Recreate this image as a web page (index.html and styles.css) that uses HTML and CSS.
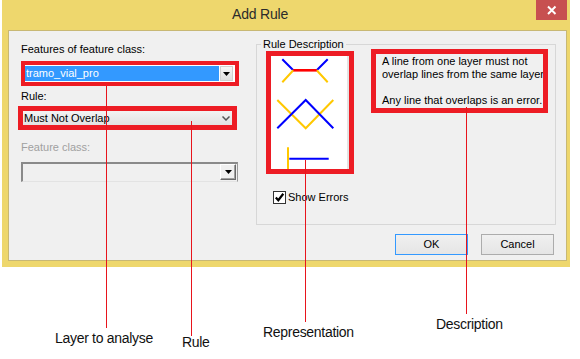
FILE: index.html
```html
<!DOCTYPE html>
<html>
<head>
<meta charset="utf-8">
<title>Add Rule</title>
<link rel="stylesheet" href="styles.css">
</head>
<body>
<div class="dialog">
  <div class="titlebar">
    <span class="title">Add Rule</span>
    <div class="close">
      <svg width="31" height="20" viewBox="0 0 31 20"><path d="M12 6.5 L19.5 14 M19.5 6.5 L12 14" stroke="#fff" stroke-width="2" fill="none"/></svg>
    </div>
  </div>
  <div class="client">
    <div class="top">
      <div class="leftcol">
        <div class="lbl">Features of feature class:</div>
        <div class="hl hl1">
          <div class="combo">
            <span class="selval">tramo_vial_pro</span>
            <span class="dbtn"><svg width="7" height="4" viewBox="0 0 7 4"><path d="M0 0 H7 L3.5 4 Z" fill="#000"/></svg></span>
          </div>
        </div>
        <div class="lbl lbl-rule">Rule:</div>
        <div class="hl hl2">
          <div class="dropdown">
            <span class="ddval">Must Not Overlap</span>
            <svg width="8" height="5" viewBox="0 0 8 5"><path d="M0.5 0.5 L4 4 L7.5 0.5" stroke="#555" stroke-width="1.5" fill="none"/></svg>
          </div>
        </div>
        <div class="lbl lbl-dis">Feature class:</div>
        <div class="combo-dis">
          <span class="dbtn2"><svg width="7" height="4" viewBox="0 0 7 4"><path d="M0 0 H7 L3.5 4 Z" fill="#000"/></svg></span>
        </div>
      </div>
      <fieldset class="group">
        <legend>Rule Description</legend>
        <div class="grow">
          <div class="hl hl3">
            <div class="pic">
              <svg width="76" height="113" viewBox="0 0 76 113">
                <rect width="76" height="113" fill="#fff"/>
                <g fill="none" stroke-width="2">
                  <path d="M11.3 3.3 L22.3 14.3 M45.7 14.3 L56.7 3.3" stroke="#0000ff"/>
                  <path d="M22.3 14.3 L11.3 26.3 M45.7 14.3 L56.7 26.3" stroke="#ffc800"/>
                  <path d="M22.3 14.3 H45.7" stroke="#ff0000" stroke-width="2.6"/>
                  <path d="M6.3 44 L34.7 72.3 L62.3 44" stroke="#ffc800"/>
                  <path d="M6.3 72.3 L34.7 44 L62.3 72.3" stroke="#0000ff"/>
                  <path d="M17 91.3 V113" stroke="#ffc800"/>
                  <path d="M18.3 102.7 H57.7" stroke="#0000ff"/>
                </g>
              </svg>
              <span class="strip"></span>
            </div>
          </div>
          <div class="hl hl4">
            <div class="desc">A line from one layer must not<br>overlap lines from the same layer<br>&nbsp;<br>Any line that overlaps is an error.</div>
          </div>
        </div>
        <div class="chk">
          <span class="box"><svg width="11" height="11" viewBox="0 0 11 11"><path d="M1.8 5.5 L4.3 8.2 L9.3 1.8" stroke="#000" stroke-width="2.2" fill="none"/></svg></span>
          <span>Show Errors</span>
        </div>
      </fieldset>
    </div>
    <div class="buttons">
      <div class="btn ok">OK</div>
      <div class="btn">Cancel</div>
    </div>
  </div>
</div>

<div class="callouts">
  <div class="vline va"></div>
  <div class="vline vb"></div>
  <div class="vline vc"></div>
  <div class="vline vd"></div>
  <div class="note na">Layer to analyse</div>
  <div class="note nb">Rule</div>
  <div class="note nc">Representation</div>
  <div class="note nd">Description</div>
</div>
</body>
</html>
```

FILE: styles.css
```css
* { box-sizing: border-box; }
html, body { margin: 0; background: #fff; }
body {
  width: 580px;
  height: 359px;
  position: relative;
  overflow: hidden;
  font-family: "Liberation Sans", Arial, sans-serif;
  font-size: 11px;
  color: #000;
}

.dialog {
  margin-left: 2px;
  width: 568px;
  height: 267px;
  background: #eed76d;
  display: flex;
  flex-direction: column;
  padding: 0 3px 6px 6px;
}

.titlebar {
  height: 30px;
  display: flex;
  align-items: flex-start;
}
.title {
  margin-left: 224px;
  line-height: 29px;
  font-size: 14px;
  letter-spacing: -0.2px;
  color: #2b2b2b;
}
.close {
  margin-left: auto;
  width: 31px;
  height: 20px;
  background: #c75050;
  display: flex;
}

.client {
  flex: 1;
  background: #f0f0f0;
  border: 1px solid #c8b874;
  padding: 7px 0 0 9px;
  display: flex;
  flex-direction: column;
}

.top {
  display: flex;
  align-items: flex-start;
}

.leftcol {
  width: 222px;
  padding-top: 5px;
  display: flex;
  flex-direction: column;
  align-items: flex-start;
}
.lbl {
  margin-left: 3px;
  line-height: 13px;
  height: 13px;
  white-space: nowrap;
}
.lbl-rule { margin-top: 4px; }
.lbl-dis { margin-top: 11px; color: #a0a0a0; }

.hl { border: 4px solid #ed1c24; }
.hl1 {
  margin-top: 5px;
  margin-left: 3px;
  width: 218px;
  height: 25px;
}
.combo {
  height: 17px;
  background: #fff;
  padding: 1px 2px 1px 0;
  display: flex;
}
.selval {
  flex: 1;
  background: #3399ff;
  color: #fff;
  line-height: 15px;
  padding-left: 1px;
}
.dbtn {
  width: 13px;
  margin-left: 1px;
  background: linear-gradient(#f6f6f6, #dedede);
  border: 1px solid #d0d0d0;
  display: flex;
  align-items: center;
  justify-content: center;
}

.hl2 {
  margin-top: 3px;
  width: 219px;
  height: 24px;
  border-width: 5px;
}
.dropdown {
  height: 14px;
  background: linear-gradient(#f3f3f3, #e2e2e2);
  display: flex;
  align-items: center;
  padding: 0 2px 0 1px;
}
.ddval { flex: 1; line-height: 14px; }

.combo-dis {
  margin-top: 8px;
  margin-left: 3px;
  width: 217px;
  height: 20px;
  background: #f0f0f0;
  border: 1px solid #9a9a9a;
  border-top: 2px solid #8a8a8a;
  border-left: 2px solid #8a8a8a;
  border-bottom-color: #e3e3e3;
  display: flex;
  justify-content: flex-end;
  align-items: flex-start;
  padding-right: 1px;
}
.dbtn2 {
  width: 16px;
  height: 16px;
  background: #f0f0f0;
  border: 1px solid;
  border-color: #fff #696969 #696969 #fff;
  box-shadow: inset -1px -1px #a0a0a0;
  display: flex;
  align-items: center;
  justify-content: center;
}

.group {
  margin: 0 0 0 16px;
  padding: 0;
  width: 300px;
  height: 187px;
  border: 1px solid #d7d7d7;
  min-inline-size: 0;
}
.group legend {
  margin-left: 4px;
  padding: 0 2px;
  line-height: 12px;
  font-size: 11px;
}
.grow {
  display: flex;
  align-items: flex-start;
}
.hl3 {
  margin-left: 9px;
  margin-top: 1px;
  border-width: 5px;
}
.pic { display: flex; }
.pic svg { display: block; }
.strip { width: 2px; background: #e4e4e4; }

.hl4 {
  margin-left: 17px;
  margin-top: -1px;
  width: 177px;
  height: 64px;
  border-width: 5px;
}
.desc {
  padding: 1px 0 1px 6px;
  line-height: 13px;
  white-space: nowrap;
  overflow: hidden;
  height: 54px;
}

.chk {
  margin: 17px 0 0 16px;
  display: flex;
  align-items: center;
  line-height: 13px;
}
.box {
  width: 13px;
  height: 13px;
  border: 1px solid #333;
  background: #fff;
  margin-right: 2px;
  display: flex;
  align-items: center;
  justify-content: center;
}

.buttons {
  margin-top: 9px;
  display: flex;
  justify-content: flex-end;
  gap: 13px;
  padding-right: 12px;
}
.btn {
  width: 73px;
  height: 21px;
  border: 1px solid #acacac;
  background: linear-gradient(#f0f0f0, #e5e5e5);
  text-align: center;
  line-height: 19px;
}
.btn.ok { border-color: #3399ff; }

/* annotation overlay */
.callouts {
  position: absolute;
  inset: 0;
  pointer-events: none;
}
.vline {
  position: absolute;
  width: 1px;
  background: #e8141c;
}
.va { left: 106px; top: 86px; height: 242px; }
.vb { left: 191px; top: 121px; height: 215px; }
.vc { left: 305px; top: 160px; height: 162px; }
.vd { left: 466px; top: 107px; height: 207px; }
.note {
  position: absolute;
  font-size: 14px;
  letter-spacing: -0.3px;
  line-height: 16px;
  color: #111;
  white-space: nowrap;
}
.na { left: 55px; top: 330px; }
.nb { left: 182px; top: 334px; }
.nc { left: 263px; top: 324px; }
.nd { left: 436px; top: 316px; }
```
